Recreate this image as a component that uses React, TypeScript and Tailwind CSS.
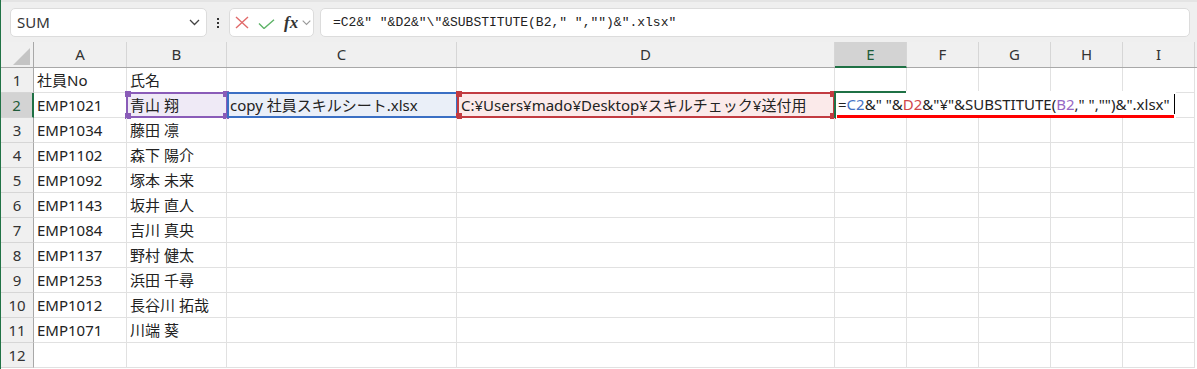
import React from 'react';

const rows: [string, string][] = [
  ['社員No', '氏名'],
  ['EMP1021', '青山 翔'],
  ['EMP1034', '藤田 凛'],
  ['EMP1102', '森下 陽介'],
  ['EMP1092', '塚本 未来'],
  ['EMP1143', '坂井 直人'],
  ['EMP1084', '吉川 真央'],
  ['EMP1137', '野村 健太'],
  ['EMP1253', '浜田 千尋'],
  ['EMP1012', '長谷川 拓哉'],
  ['EMP1071', '川端 葵'],
  ['', ''],
];

const cols = ['A', 'B', 'C', 'D', 'E', 'F', 'G', 'H', 'I'];
const gridCols = 'grid grid-cols-[33px_93px_100px_230px_378px_72px_72px_72px_72px_72px]';
const font = "font-['Noto_Sans','Noto_Sans_CJK_JP',sans-serif]";

function Handles({ color }: { color: string }) {
  return (
    <>
      <span className={`absolute -left-[3px] -top-[3px] w-[6px] h-[6px] ${color}`} />
      <span className={`absolute -right-[3px] -top-[3px] w-[6px] h-[6px] ${color}`} />
      <span className={`absolute -left-[3px] -bottom-[3px] w-[6px] h-[6px] ${color}`} />
      <span className={`absolute -right-[3px] -bottom-[3px] w-[6px] h-[6px] ${color}`} />
    </>
  );
}

function FormulaBar() {
  return (
    <div className="h-[42px] bg-[#efefef] border-t-2 border-[#e4e4e4] flex items-start pt-[6px] pl-[9px] pr-[7px]">
      {/* name box */}
      <div className="w-[197px] h-[29px] bg-white rounded-[5px] border border-[#dcdcdc] flex items-center justify-between pl-[6px] pr-[6px]">
        <span className={`${font} text-[15px] text-[#333]`}>SUM</span>
        <svg width="11" height="7" viewBox="0 0 11 7">
          <path d="M1 1l4.5 4.5L10 1" fill="none" stroke="#444" strokeWidth="1.3" />
        </svg>
      </div>
      <div className="w-[22px] h-[29px] flex flex-col items-center justify-center gap-[2px]">
        <span className="w-[2px] h-[2px] bg-[#333]" />
        <span className="w-[2px] h-[2px] bg-[#333]" />
        <span className="w-[2px] h-[2px] bg-[#333]" />
      </div>
      {/* cancel / enter / fx */}
      <div className="w-[85px] h-[29px] bg-white rounded-[5px] border border-[#dcdcdc] flex items-center pl-[4px]">
        <svg width="14" height="13" viewBox="0 0 14 13" className="ml-[1px]">
          <path d="M1 1l12 11M13 1L1 12" stroke="#e16a6a" strokeWidth="1.4" fill="none" />
        </svg>
        <svg width="17" height="10" viewBox="0 0 17 10" className="ml-[9px] mt-[2px]">
          <path d="M1 4.5l5 5L16 0.7" stroke="#5db367" strokeWidth="1.4" fill="none" />
        </svg>
        <span className="ml-[9px] font-['Liberation_Serif',serif] italic font-bold text-[17px] text-[#333] leading-none">fx</span>
        <svg width="9" height="6" viewBox="0 0 9 6" className="ml-[4px]">
          <path d="M0.7 0.7l3.8 3.8 3.8-3.8" fill="none" stroke="#999" strokeWidth="1.1" />
        </svg>
      </div>
      {/* formula input */}
      <div className="flex-1 ml-[6px] h-[29px] bg-white rounded-[5px] border border-[#dcdcdc] flex items-center pl-[12px]">
        <span className="font-['Liberation_Mono',monospace] text-[13px] text-[#222] whitespace-pre">
          =C2&amp;" "&amp;D2&amp;"\"&amp;SUBSTITUTE(B2," ","")&amp;".xlsx"
        </span>
      </div>
    </div>
  );
}

function HeaderRow() {
  return (
    <div className={`${gridCols} h-[26px] bg-[#f0f0f0] border-b border-[#a8a8a8]`}>
      <div className="relative border-r border-[#a8a8a8]">
        <svg width="18" height="17" viewBox="0 0 18 17" className="absolute right-[2px] bottom-[2px]">
          <path d="M17 0L17 17L0 17Z" fill="#c4c4c4" />
        </svg>
      </div>
      {cols.map((c) =>
        c === 'E' ? (
          <div
            key={c}
            className={`${font} bg-[#d3d3d3] border-r border-[#d6d6d6] border-b-2 border-b-[#1f7145] -mb-[1px] flex items-center justify-center text-[15px] text-[#1f5c3a]`}
          >
            {c}
          </div>
        ) : (
          <div key={c} className={`${font} border-r border-[#d6d6d6] flex items-center justify-center text-[15px] text-[#333]`}>
            {c}
          </div>
        )
      )}
    </div>
  );
}

function EditCell() {
  return (
    <div className="relative border-b border-[#e1e1e1]">
      <div className="absolute -left-[1px] -top-[2px] w-[342px] h-[27px] bg-white z-10 border-l-2 border-[#1f7145]">
        <div className="absolute left-0 top-0 w-[70px] h-[2px] bg-[#1f7145]" />
        <div className={`${font} absolute left-[2px] top-[2px] text-[15px] leading-[22px] text-[#222] whitespace-pre`}>
          =<span className="text-[#4472c4]">C2</span>&amp;" "&amp;<span className="text-[#d0474b]">D2</span>&amp;"¥"&amp;SUBSTITUTE(<span className="text-[#9668c5]">B2</span>," ","")&amp;".xlsx"
        </div>
        <div className="absolute right-[1px] top-[3px] w-[1px] h-[20px] bg-black" />
        <div className="absolute left-[1px] right-[2px] bottom-[0px] h-[3px] bg-[#ff0000]" />
      </div>
    </div>
  );
}

function Row({ n, a, b }: { n: number; a: string; b: string }) {
  const active = n === 2;
  const cell = 'relative border-r border-b border-[#e1e1e1]';
  const text = `${font} text-[15px] text-[#222] leading-[24px] pl-[3px] whitespace-nowrap`;
  return (
    <div className={`${gridCols} h-[25px]`}>
      <div
        className={`${font} flex items-center justify-center text-[15px] border-b border-[#d6d6d6] ${
          active ? 'bg-[#d3d3d3] border-r-2 border-r-[#1f7145] text-[#1f5c3a]' : 'bg-[#f0f0f0] border-r border-r-[#a8a8a8] text-[#333]'
        }`}
      >
        {n}
      </div>
      <div className={cell}>
        <div className={text}>{a}</div>
      </div>
      {active ? (
        <>
          <div className="relative border-b border-[#e1e1e1] bg-[#efeaf6]">
            <div className="absolute -left-[1px] -top-[1px] -right-[1px] -bottom-[1px] border-2 border-[#8a5cb8]">
              <Handles color="bg-[#8a5cb8]" />
            </div>
            <div className={`relative ${text}`}>{b}</div>
          </div>
          <div className="relative border-b border-[#e1e1e1] bg-[#eaeff8]">
            <div className="absolute left-0 -top-[1px] -right-[1px] -bottom-[1px] border-2 border-[#3a6fc4]" />
            <div className={`relative ${text}`}>copy 社員スキルシート.xlsx</div>
          </div>
          <div className="relative border-b border-[#e1e1e1] bg-[#fbeaea]">
            <div className="absolute left-0 -top-[1px] right-0 -bottom-[1px] border-2 border-[#c23b41]">
              <Handles color="bg-[#c23b41]" />
            </div>
            <div className={`relative ${text} pl-[4px]`}>C:¥Users¥mado¥Desktop¥スキルチェック¥送付用</div>
          </div>
          <EditCell />
          <div className="border-r border-b border-[#e1e1e1]" />
          <div className="border-r border-b border-[#e1e1e1]" />
          <div className="border-r border-b border-[#e1e1e1]" />
          <div className="border-r border-b border-[#e1e1e1]" />
        </>
      ) : (
        <>
          <div className={cell}>
            <div className={text}>{b}</div>
          </div>
          {[0, 1, 2, 3, 4, 5, 6].map((i) => (
            <div key={i} className={cell} />
          ))}
        </>
      )}
    </div>
  );
}

export default function App() {
  return (
    <div className="w-[1197px] h-[369px] overflow-hidden bg-white border-l border-[#217346]">
      <FormulaBar />
      <HeaderRow />
      {rows.map(([a, b], i) => (
        <Row key={i} n={i + 1} a={a} b={b} />
      ))}
    </div>
  );
}
